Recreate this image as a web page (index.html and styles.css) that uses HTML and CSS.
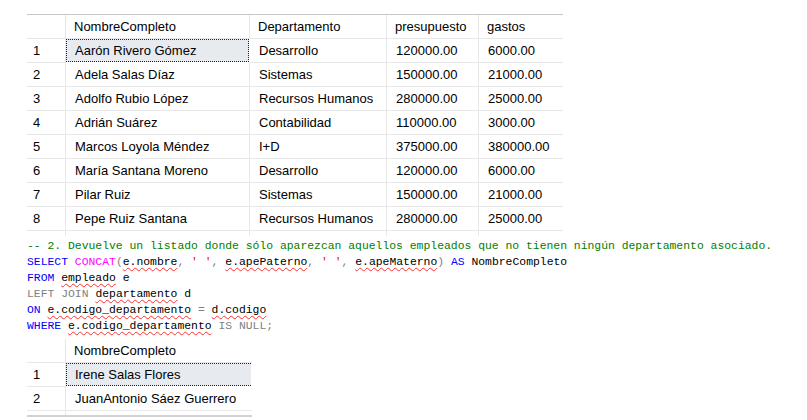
FILE: index.html
```html
<!DOCTYPE html>
<html lang="es">
<head>
<meta charset="utf-8">
<title>Resultados</title>
<link rel="stylesheet" href="styles.css">
</head>
<body>
<div class="page">
  <div class="grid grid-main">
    <div class="c h rn"></div><div class="c h">NombreCompleto</div><div class="c h">Departamento</div><div class="c h">presupuesto</div><div class="c h">gastos</div>
    <div class="c rn">1</div><div class="c d sel">Aarón Rivero Gómez</div><div class="c d">Desarrollo</div><div class="c d">120000.00</div><div class="c d">6000.00</div>
    <div class="c rn">2</div><div class="c d">Adela Salas Díaz</div><div class="c d">Sistemas</div><div class="c d">150000.00</div><div class="c d">21000.00</div>
    <div class="c rn">3</div><div class="c d">Adolfo Rubio López</div><div class="c d">Recursos Humanos</div><div class="c d">280000.00</div><div class="c d">25000.00</div>
    <div class="c rn">4</div><div class="c d">Adrián Suárez</div><div class="c d">Contabilidad</div><div class="c d">110000.00</div><div class="c d">3000.00</div>
    <div class="c rn">5</div><div class="c d">Marcos Loyola Méndez</div><div class="c d">I+D</div><div class="c d">375000.00</div><div class="c d">380000.00</div>
    <div class="c rn">6</div><div class="c d">María Santana Moreno</div><div class="c d">Desarrollo</div><div class="c d">120000.00</div><div class="c d">6000.00</div>
    <div class="c rn">7</div><div class="c d">Pilar Ruiz</div><div class="c d">Sistemas</div><div class="c d">150000.00</div><div class="c d">21000.00</div>
    <div class="c rn">8</div><div class="c d">Pepe Ruiz Santana</div><div class="c d">Recursos Humanos</div><div class="c d">280000.00</div><div class="c d">25000.00</div>
    <div class="c rn last"></div><div class="c last"></div><div class="c last"></div><div class="c last"></div><div class="c last"></div>
  </div>
<pre class="sql"><span class="cm">-- 2. Devuelve un listado donde sólo aparezcan aquellos empleados que no tienen ningún departamento asociado.</span>
<span class="kw">SELECT</span> <span class="fn">CONCAT</span><span class="op">(</span><span class="sq">e.nombre</span><span class="op">,</span> <span class="st">' '</span><span class="op">,</span> <span class="sq">e.apePaterno</span><span class="op">,</span> <span class="st">' '</span><span class="op">,</span> <span class="sq">e.apeMaterno</span><span class="op">)</span> <span class="kw">AS</span> NombreCompleto
<span class="kw">FROM</span> <span class="sq">empleado</span> e
<span class="op">LEFT JOIN</span> <span class="sq">departamento</span> d
<span class="kw">ON</span> <span class="sq">e.codigo_departamento</span> <span class="op">=</span> <span class="sq">d.codigo</span>
<span class="kw">WHERE</span> <span class="sq">e.codigo_departamento</span> <span class="op">IS NULL</span><span class="op">;</span></pre>
  <div class="grid grid-second">
    <div class="c h rn nb"></div><div class="c h">NombreCompleto</div>
    <div class="c rn">1</div><div class="c d sel">Irene Salas Flores</div>
    <div class="c rn">2</div><div class="c d">JuanAntonio Sáez Guerrero</div>
    <div class="c rn tail"></div><div class="c tail"></div>
  </div>
  <div class="bar"></div>
</div>
</body>
</html>
```
FILE: styles.css
```css
html, body {
  margin: 0;
  padding: 0;
  background: #ffffff;
}
.page {
  padding: 14px 0 0 27px;
  display: flex;
  flex-direction: column;
  align-items: flex-start;
}
.grid {
  display: grid;
  font-family: "Liberation Sans", Arial, sans-serif;
  font-size: 13px;
  color: #000;
}
.grid-main {
  grid-template-columns: 39px 184px 137px 92px 84px;
  grid-template-rows: repeat(9, 24px) 5px;
  border-top: 1px solid #c6c6c6;
}
.grid-second {
  grid-template-columns: 39px 186px;
  grid-template-rows: repeat(3, 24px) 4px;
  margin-top: 5px;
}
.c {
  box-sizing: border-box;
  border-right: 1px solid #e8e8e8;
  border-bottom: 1px solid #e8e8e8;
  display: flex;
  align-items: center;
  white-space: nowrap;
  overflow: hidden;
}
.c.h {
  padding-left: 8px;
}
.c.d {
  padding-left: 9px;
}
.c.rn {
  padding-left: 6px;
}
.c.last,
.c.tail {
  border-bottom: none;
}
.grid-main .c:nth-child(5n) {
  border-right: none;
}
.grid-second .c:nth-child(2n) {
  border-right: none;
}
.c.sel {
  background: #e7ebf0;
  border: 1px dotted #222;
  margin: 0 1px 1px 0;
  padding-left: 8px;
}
.bar {
  width: 225px;
  height: 2px;
  background: #d2d2d2;
}
.sql {
  margin: 2px 0 0 0;
  font-family: "Liberation Mono", "Courier New", monospace;
  font-size: 11.4px;
  line-height: 16px;
  color: #000;
}
.cm { color: #008000; }
.kw { color: #0000ff; }
.fn { color: #ff00ff; }
.op { color: #808080; }
.st { color: #ff0000; }
.sq {
  text-decoration: underline wavy #ff3030;
  text-decoration-thickness: 1px;
  text-underline-offset: 2px;
}
```
